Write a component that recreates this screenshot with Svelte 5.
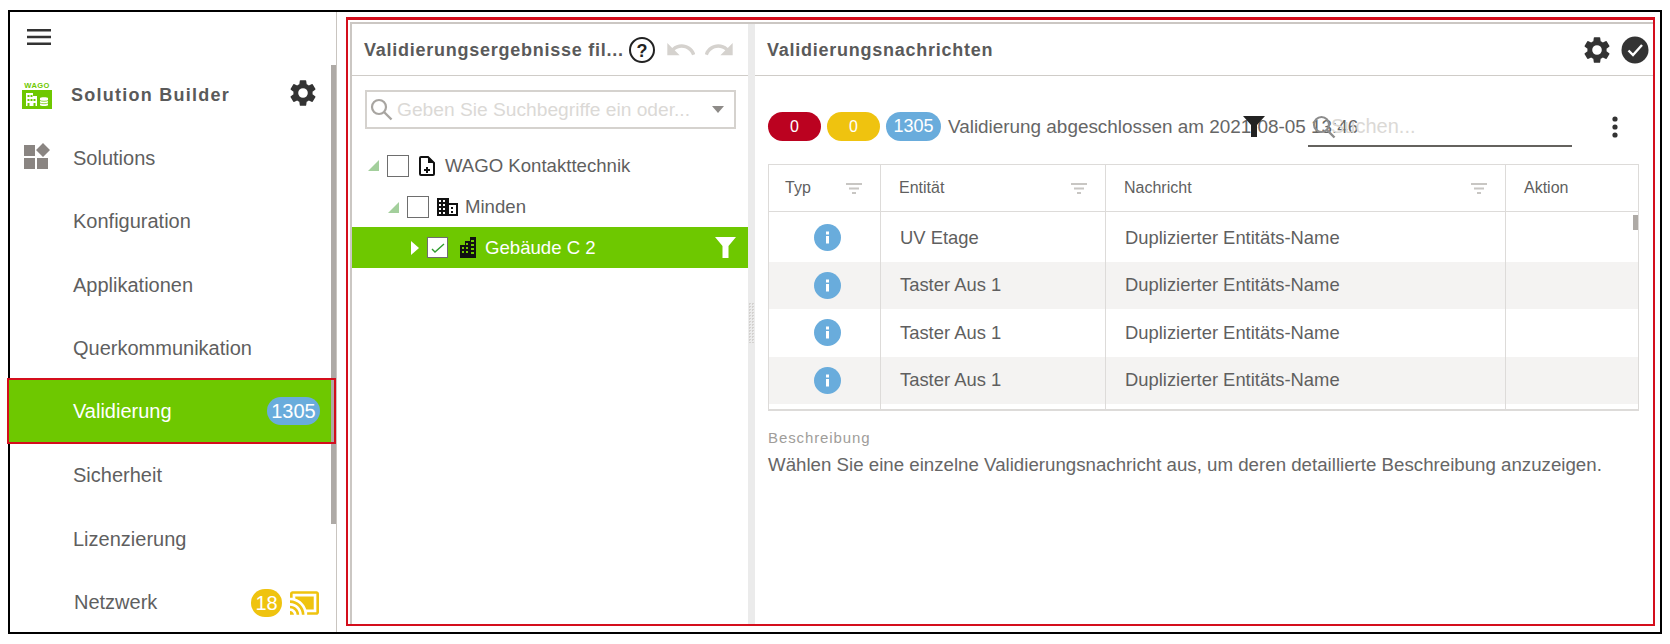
<script lang="ts">
  const nav = [
    { label: "Konfiguration" },
    { label: "Applikationen" },
    { label: "Querkommunikation" },
    { label: "Validierung", active: true, badge: "1305", tone: "blue" },
    { label: "Sicherheit" },
    { label: "Lizenzierung" },
    { label: "Netzwerk", badge: "18", tone: "yellow", cast: true },
  ];

  const rows = [
    ["UV Etage", "Duplizierter Entitäts-Name"],
    ["Taster Aus 1", "Duplizierter Entitäts-Name"],
    ["Taster Aus 1", "Duplizierter Entitäts-Name"],
    ["Taster Aus 1", "Duplizierter Entitäts-Name"],
  ];

  const gear =
    "M19.14 12.94c.04-.3.06-.61.06-.94s-.02-.64-.07-.94l2.03-1.58a.49.49 0 0 0 .12-.61l-1.92-3.32a.49.49 0 0 0-.59-.22l-2.39.96a7 7 0 0 0-1.62-.94l-.36-2.54a.48.48 0 0 0-.48-.41h-3.84a.48.48 0 0 0-.47.41l-.36 2.54a7.3 7.3 0 0 0-1.62.94l-2.39-.96a.48.48 0 0 0-.59.22L2.74 8.87a.48.48 0 0 0 .12.61l2.03 1.58c-.05.3-.09.63-.09.94s.02.64.07.94l-2.03 1.58a.49.49 0 0 0-.12.61l1.92 3.32c.12.22.37.29.59.22l2.39-.96c.5.38 1.03.7 1.62.94l.36 2.54c.05.24.24.41.48.41h3.84c.24 0 .44-.17.47-.41l.36-2.54a7 7 0 0 0 1.62-.94l2.39.96c.22.08.47 0 .59-.22l1.92-3.32a.48.48 0 0 0-.12-.61l-2.01-1.58zM12 15.6a3.6 3.6 0 1 1 0-7.2 3.6 3.6 0 0 1 0 7.2z";
</script>

<div class="shot">
  <aside class="sidebar">
    <div class="scroll-thumb"></div>
    <div class="burger">
      <svg width="24" height="16" viewBox="0 0 24 16"><path d="M0 0h24v2.6H0zM0 6.7h24v2.6H0zM0 13.4h24V16H0z" fill="#333" /></svg>
    </div>
    <div class="nav-row brand">
      <div class="logo">
        <span class="logo-word">WAGO</span>
        <svg width="30" height="19" viewBox="0 0 30 19">
          <rect width="30" height="19" fill="#6ec800" />
          <path d="M4 3h7v3h4v10H4z" fill="#fff" />
          <path d="M5.500 5h2v2h-2zM8.500 5h2v2h-2zM5.500 9h2v2h-2zM8.500 9h2v2h-2zM5.500 13h2v3h-2zM11.500 9h2v2h-2zM11.500 13h2v3h-2z" fill="#6ec800" />
          <path d="M18 8c0-1 8-1 8 0v7c0 1.300-8 1.300-8 0z" fill="#fff" />
          <path d="M18 10.500c1 1 7 1 8 0M18 13c1 1 7 1 8 0" fill="none" stroke="#6ec800" stroke-width=".8" />
        </svg>
      </div>
      <span class="brand-name">Solution Builder</span>
      <svg class="brand-gear" width="32" height="32" viewBox="0 0 24 24"><path d={gear} fill="#333" /></svg>
    </div>
    <div class="nav-row">
      <svg class="solutions-icon" width="26" height="27" viewBox="0 0 26 27">
        <path d="M0 3h11v11H0zM0 16h11v11H0zM13 16h11v11H13zM19 1l7 7-7 7-7-7z" fill="#8a8582" />
      </svg>
      <span class="nav-label">Solutions</span>
    </div>
    {#each nav as item}
      <div class="nav-row" class:active={item.active}>
        <span class="nav-label" class:net={item.cast}>{item.label}</span>
        {#if item.badge}
          <span class="nav-badge {item.tone}">{item.badge}</span>
        {/if}
        {#if item.cast}
          <svg class="cast" width="29" height="24" viewBox="1 3 22 18">
            <path d="M21 3H3c-1.100 0-2 .9-2 2v3h2V5h18v14h-7v2h7c1.100 0 2-.9 2-2V5c0-1.100-.9-2-2-2z" fill="#efc30f" />
            <path d="M19 7H5v1.630c3.960 1.280 7.090 4.410 8.370 8.370H19V7z" fill="#efc30f" />
            <path d="M1 18v3h3c0-1.660-1.340-3-3-3zM1 14v2c2.760 0 5 2.240 5 5h2c0-3.870-3.130-7-7-7zM1 10v2c4.970 0 9 4.030 9 9h2c0-6.080-4.930-11-11-11z" fill="#efc30f" />
          </svg>
        {/if}
      </div>
    {/each}
  </aside>

  <main class="main">
    <div class="redframe">
      <div class="panels">
        <section class="filter-panel">
          <header class="panel-head">
            <h2 class="filter-title">Validierungsergebnisse fil...</h2>
            <svg class="help" width="28" height="28" viewBox="0 0 28 28">
              <circle cx="14" cy="14" r="12" fill="none" stroke="#222" stroke-width="2" />
              <text x="14" y="20.5" text-anchor="middle" font-size="18" font-weight="700" font-family="Liberation Sans, sans-serif" fill="#222">?</text>
            </svg>
            <svg class="undo" width="28" height="13" viewBox="2 7 20 9.5"><path d="M12.500 8c-2.650 0-5.050.99-6.900 2.600L2 7v9h9l-3.620-3.620c1.390-1.160 3.160-1.880 5.120-1.880 3.540 0 6.550 2.310 7.600 5.500l2.370-.78C21.080 11.030 17.150 8 12.500 8z" fill="#d5d2ce" /></svg>
            <svg class="redo" width="28" height="13" viewBox="2 7 20 9.5"><path d="M18.400 10.600C16.550 8.990 14.150 8 11.500 8c-4.650 0-8.580 3.030-9.960 7.220L3.900 16c1.050-3.190 4.050-5.500 7.600-5.500 1.950 0 3.730.72 5.120 1.880L13 16h9V7l-3.600 3.600z" fill="#d5d2ce" /></svg>
          </header>
          <div class="search-box">
            <svg width="23" height="23" viewBox="0 0 23 23"><circle cx="9" cy="9" r="7" fill="none" stroke="#a8a5a1" stroke-width="2.200" /><path d="M14 14l7.500 7.500" stroke="#a8a5a1" stroke-width="2.400" /></svg>
            <span class="search-hint">Geben Sie Suchbegriffe ein oder...</span>
            <span class="caret"></span>
          </div>
          <div class="tree">
            <div class="tree-row level0">
              <span class="corner"></span>
              <span class="check"></span>
              <svg class="doc" width="16" height="20" viewBox="0 0 16 20"><path d="M2 1h7l6 6v11a1 1 0 0 1-1 1H2a1 1 0 0 1-1-1V2a1 1 0 0 1 1-1z" fill="none" stroke="#111" stroke-width="2" /><path d="M9 1v6h6" fill="#111" /><path d="M7 11h2v2h2v2H9v2H7v-2H5v-2h2z" fill="#111" /></svg>
              <span>WAGO Kontakttechnik</span>
            </div>
            <div class="tree-row level1">
              <span class="corner"></span>
              <span class="check"></span>
              <svg class="domain" width="21" height="18" viewBox="0 0 21 18"><path d="M0 0h12v5h9v13H0z" fill="#111" /><path d="M2 2h2v2H2zM6 2h2v2H6zM2 6h2v2H2zM6 6h2v2H6zM2 10h2v2H2zM6 10h2v2H6zM2 14h2v2H2zM6 14h2v2H6zM12 7h7v9h-7z" fill="#fff" /><path d="M14 9h2v2h-2zM14 13h2v2h-2z" fill="#111" /></svg>
              <span>Minden</span>
            </div>
            <div class="tree-row level2">
              <span class="expand"></span>
              <span class="check checked">
                <svg width="14" height="10" viewBox="0 0 14 10"><path d="M1 6l3 3 9-8" fill="none" stroke="#2e9e2e" stroke-width="1.400" /></svg>
              </span>
              <svg class="tower" width="16" height="21" viewBox="0 0 16 21"><path d="M0 8h5V4h5V0h6v21H0z" fill="#111" /><path d="M2 10h2v2H2zM2 14h2v2H2zM6 6h2v2H6zM6 10h2v2H6zM6 14h2v2H6zM11 3h3v2h-3zM11 7h3v2h-3zM11 11h3v2h-3zM11 15h3v2h-3z" fill="#6ec800" /></svg>
              <span>Gebäude C 2</span>
              <svg class="tree-filter" width="21" height="21" viewBox="0 0 21 21"><path d="M0 0h21l-7.500 9v12h-6V9z" fill="#fff" /></svg>
            </div>
          </div>
        </section>

        <div class="splitter"><span class="grip"></span></div>

        <section class="messages">
          <header class="panel-head msg-head">
            <h2>Validierungsnachrichten</h2>
            <svg class="head-gear" width="32" height="32" viewBox="0 0 24 24"><path d={gear} fill="#333" /></svg>
            <svg class="head-check" width="28" height="28" viewBox="0 0 28 28"><circle cx="14" cy="14" r="13.500" fill="#333" /><path d="M7.500 14.500l4.500 4.500 9-10" fill="none" stroke="#fff" stroke-width="2.400" /></svg>
          </header>

          <div class="toolbar">
            <span class="pill red">0</span>
            <span class="pill yellow">0</span>
            <span class="pill blue">1305</span>
            <span class="status">Validierung abgeschlossen am 2021-08-05 13:46</span>
            <svg class="funnel" width="22" height="21" viewBox="0 0 22 21"><path d="M0 0h22l-8 9v12H8V9z" fill="#222" /></svg>
            <div class="msg-search">
              <svg width="24" height="24" viewBox="0 0 24 24"><circle cx="9.500" cy="9.500" r="7.500" fill="none" stroke="#8c8c8c" stroke-width="2.200" /><path d="M15 15l7.500 7.500" stroke="#8c8c8c" stroke-width="2.400" /></svg>
              <span>Suchen...</span>
            </div>
            <svg class="dots" width="6" height="22" viewBox="0 0 6 22"><circle cx="3" cy="3" r="2.600" fill="#333" /><circle cx="3" cy="11" r="2.600" fill="#333" /><circle cx="3" cy="19" r="2.600" fill="#333" /></svg>
          </div>

          <div class="table-wrap">
            <span class="table-thumb"></span>
            <table>
              <colgroup>
                <col class="c-typ" /><col class="c-ent" /><col class="c-msg" /><col />
              </colgroup>
              <thead>
                <tr>
                  {#each ["Typ", "Entität", "Nachricht"] as head}
                    <th>
                      <div class="th-inner">
                        {head}
                        <svg width="16" height="11" viewBox="0 0 16 11"><path d="M0 0h16v2H0zM3 4.500h10v2H3zM6 9h4v2H6z" fill="#c8c6c3" /></svg>
                      </div>
                    </th>
                  {/each}
                  <th>Aktion</th>
                </tr>
              </thead>
              <tbody>
                {#each rows as [entity, message]}
                  <tr>
                    <td class="type-cell">
                      <svg width="27" height="27" viewBox="0 0 27 27">
                        <circle cx="13.500" cy="13.500" r="13.500" fill="#69acdc" />
                        <path d="M12 7.500h3v3h-3zM12 12h3v7.500h-3z" fill="#fff" />
                      </svg>
                    </td>
                    <td>{entity}</td>
                    <td>{message}</td>
                    <td></td>
                  </tr>
                {/each}
                <tr class="spacer"><td></td><td></td><td></td><td></td></tr>
              </tbody>
            </table>
          </div>

          <div class="desc">
            <div class="desc-label">Beschreibung</div>
            <p>Wählen Sie eine einzelne Validierungsnachricht aus, um deren detaillierte Beschreibung anzuzeigen.</p>
          </div>
        </section>
      </div>
    </div>
  </main>
</div>

<style>
  :global(body) {
    background: #fff;
    font-family: "Liberation Sans", Arial, sans-serif;
    color: #5f5f5f;
  }

  .shot {
    position: relative;
    box-sizing: border-box;
    display: flex;
    width: 1654px;
    height: 624px;
    margin: 10px 0 0 8px;
    border: 2px solid #000;
  }

  .sidebar {
    position: relative;
    flex: 0 0 327px;
    height: 620px;
    box-sizing: border-box;
    border-right: 1px solid #c9c5c0;
  }

  .scroll-thumb {
    position: absolute;
    z-index: 1;
    top: 53px;
    right: 0;
    width: 5px;
    height: 459px;
    background: #aeaaa6;
  }

  .burger {
    height: 51px;
    padding: 17px 0 0 17px;
    box-sizing: border-box;
  }

  .nav-row {
    position: relative;
    display: flex;
    align-items: center;
    height: 63.5px;
    padding: 0 16px 0 63px;
    box-sizing: border-box;
    font-size: 20px;
  }

  .brand {
    padding-left: 12px;
  }

  .logo {
    display: flex;
    flex-direction: column;
    align-items: center;
    width: 30px;
    margin-right: 19px;
  }

  .logo-word {
    font-size: 7.5px;
    line-height: 9px;
    font-weight: 700;
    letter-spacing: 0.4px;
    color: #6ec800;
  }

  .brand-name {
    margin-top: 2px;
    font-weight: 700;
    font-size: 18px;
    letter-spacing: 1.25px;
    color: #5a5a5a;
  }

  .brand-gear {
    margin-left: auto;
    margin-right: 1px;
    margin-top: -4px;
  }

  .solutions-icon {
    position: absolute;
    left: 14px;
    top: 15px;
  }

  .nav-label.net {
    margin-left: 1px;
  }

  .active {
    background: #6ec800;
    color: #fff;
    height: 66.5px;
    margin-top: -3px;
    margin-left: -3px;
    padding-top: 1px;
    padding-left: 66px;
  }

  .active::after {
    content: "";
    position: absolute;
    z-index: 2;
    inset: 0;
    border: 2px solid #d40e1c;
  }

  .nav-badge {
    margin-left: auto;
    height: 28px;
    line-height: 28px;
    border-radius: 14px;
    text-align: center;
    color: #fff;
    font-size: 20px;
  }

  .nav-badge.blue {
    width: 53px;
    background: #69acdc;
    margin-right: 0;
  }

  .nav-badge.yellow {
    width: 31px;
    background: #efc30f;
    margin-right: 8px;
  }

  .cast {
    flex: none;
    margin-right: 1px;
  }

  .main {
    flex: 1;
    min-width: 0;
    padding: 5px 5px 6px 9px;
  }

  .redframe {
    box-sizing: border-box;
    height: 100%;
    border: 2px solid #d40e1c;
    border-top-width: 3px;
    padding: 2px 0 0 2px;
  }

  .panels {
    display: flex;
    height: 100%;
    box-sizing: border-box;
    border-left: 2px solid #cbc7c3;
    border-top: 2px solid #cbc7c3;
  }

  .filter-panel {
    flex: 0 0 396px;
  }

  .panel-head {
    display: flex;
    align-items: center;
    height: 52px;
    box-sizing: border-box;
    padding-left: 12px;
    border-bottom: 1px solid #cfccc8;
  }

  h2 {
    margin: 2px 0 0;
    font-size: 18px;
    font-weight: 700;
    letter-spacing: 0.75px;
    color: #5a5a5a;
  }

  .filter-title {
    flex: 0 0 264px;
    white-space: nowrap;
  }

  .help {
    flex: none;
  }

  .undo {
    flex: none;
    margin-left: 11px;
  }

  .redo {
    flex: none;
    margin-left: 10px;
  }

  .search-box {
    display: flex;
    align-items: center;
    gap: 4px;
    height: 39px;
    box-sizing: border-box;
    margin: 14px 12px 0 13px;
    padding: 0 10px 0 3px;
    border: 2px solid #d5d2ce;
  }

  .search-hint {
    flex: 1;
    font-size: 19.2px;
    color: #dbd9d6;
    white-space: nowrap;
  }

  .caret {
    width: 0;
    height: 0;
    border-left: 6px solid transparent;
    border-right: 6px solid transparent;
    border-top: 7px solid #8e8b88;
  }

  .tree {
    margin-top: 16px;
  }

  .tree-row {
    display: flex;
    align-items: center;
    height: 41px;
    box-sizing: border-box;
    font-size: 18.6px;
  }

  .level0 {
    padding-left: 16px;
  }

  .level1 {
    padding-left: 36px;
    height: 42px;
  }

  .level2 {
    position: relative;
    margin-top: -1px;
    padding-left: 59px;
    background: #6ec800;
    color: #fff;
  }

  .corner {
    width: 0;
    height: 0;
    margin-right: 8px;
    border-bottom: 11px solid #a3cf9c;
    border-left: 11px solid transparent;
  }

  .expand {
    width: 0;
    height: 0;
    margin-right: 8px;
    border-left: 8px solid #fff;
    border-top: 7px solid transparent;
    border-bottom: 7px solid transparent;
  }

  .check {
    display: flex;
    align-items: center;
    justify-content: center;
    flex: none;
    width: 22px;
    height: 22px;
    box-sizing: border-box;
    border: 1px solid #6e6e6e;
    background: #fff;
  }

  .check.checked {
    width: 21px;
    height: 21px;
  }

  .doc {
    margin: 0 10px;
  }

  .domain {
    margin: 0 7px 0 8px;
  }

  .tower {
    margin: 0 9px 0 12px;
  }

  .tree-filter {
    position: absolute;
    right: 12px;
    top: 10px;
  }

  .splitter {
    position: relative;
    flex: 0 0 7px;
    background: #ebebeb;
  }

  .grip {
    position: absolute;
    top: 279px;
    left: 0;
    width: 7px;
    height: 40px;
    background: conic-gradient(#d3d1cf 25%, transparent 0) 0 0 / 3px 3px;
  }

  .messages {
    flex: 1;
    min-width: 0;
  }

  .msg-head {
    padding-right: 4px;
  }

  .msg-head h2 {
    margin-right: auto;
  }

  .head-check {
    margin-left: 8px;
  }

  .toolbar {
    position: relative;
    display: flex;
    align-items: center;
    gap: 6px;
    height: 29px;
    margin-top: 36px;
    padding-left: 13px;
  }

  .pill {
    width: 53px;
    height: 29px;
    line-height: 29px;
    border-radius: 15px;
    text-align: center;
    color: #fff;
    font-size: 16px;
  }

  .pill.red {
    background: #bb0220;
  }

  .pill.yellow {
    background: #efc30f;
  }

  .pill.blue {
    width: 55px;
    background: #69acdc;
    font-size: 18px;
  }

  .status {
    margin-left: 1px;
    font-size: 18.9px;
    white-space: nowrap;
    color: #666;
  }

  .funnel {
    position: absolute;
    left: 488px;
    top: 4px;
  }

  .msg-search {
    position: absolute;
    left: 553px;
    top: 2px;
    display: flex;
    align-items: center;
    gap: 0;
    width: 264px;
    height: 33px;
    box-sizing: border-box;
    padding: 0 0 6px 4px;
    border-bottom: 2px solid #64625e;
    font-size: 20px;
    color: #dbd9d6;
  }

  .msg-search span {
    margin-left: -5px;
  }

  .dots {
    position: absolute;
    left: 857px;
    top: 4px;
  }

  .table-wrap {
    position: relative;
    margin: 23px 14px 0 13px;
  }

  .table-thumb {
    position: absolute;
    right: 1px;
    top: 51px;
    width: 5px;
    height: 15px;
    background: #aeaaa6;
  }

  table {
    width: 100%;
    border-collapse: collapse;
    table-layout: fixed;
    border: 1px solid #dddbd9;
    border-bottom-width: 2px;
    font-size: 18.4px;
  }

  .c-typ {
    width: 112px;
  }

  .c-ent {
    width: 225px;
  }

  .c-msg {
    width: 400px;
  }

  th {
    height: 46px;
    padding: 0 18px;
    font-size: 16px;
    font-weight: 400;
    text-align: left;
    border-left: 1px solid #dddbd9;
    border-bottom: 1px solid #dddbd9;
  }

  th:first-child {
    padding-left: 16px;
  }

  .th-inner {
    display: flex;
    align-items: center;
    justify-content: space-between;
  }

  td {
    height: 47.5px;
    box-sizing: border-box;
    padding: 0 18px 0 19px;
    border-left: 1px solid #dddbd9;
  }

  tbody tr:first-child td {
    height: 50px;
    padding-top: 2px;
  }

  tbody tr:nth-child(even) td {
    background: #f4f3f2;
  }

  td.type-cell {
    padding-right: 0;
    padding-left: 6px;
    text-align: center;
  }

  .type-cell svg {
    display: block;
    margin: 0 auto;
  }

  tbody .spacer td {
    height: 6px;
    background: #fff;
  }

  .desc {
    padding: 18px 13px 0;
  }

  .desc-label {
    font-size: 15px;
    letter-spacing: 0.9px;
    color: #a09d9a;
  }

  .desc p {
    margin: 8px 0 0;
    font-size: 18.7px;
    white-space: nowrap;
    color: #666;
  }
</style>
